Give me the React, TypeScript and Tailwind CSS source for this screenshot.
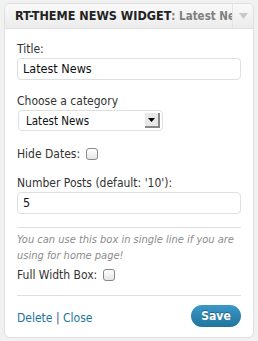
import React from "react";

export default function App() {
  const font = { fontFamily: '"DejaVu Sans Condensed", "DejaVu Sans", Verdana, sans-serif' };
  return (
    <div className="w-[258px] h-[341px] bg-[#f1f1f1] pt-[3px] px-[4px] text-[#333]" style={font}>
      <div className="w-[250px] h-[335px] border border-[#dfdfdf] rounded-[6px] bg-white flex flex-col overflow-hidden">
        <div className="h-[25px] shrink-0 flex items-stretch bg-gradient-to-b from-[#f9f9f9] to-[#ececec] border-b border-[#dfdfdf]">
          <div className="flex-1 min-w-0 overflow-hidden whitespace-nowrap pl-[10px] flex items-center leading-[14px] font-bold">
            <span className="text-[#222] text-[12.5px]">RT-THEME NEWS WIDGET</span>
            <span className="text-[#808080] text-[11.5px]">:&nbsp;Latest&nbsp;News</span>
          </div>
          <div className="w-[21px] shrink-0 border-l border-[#e4e4e4] flex items-center justify-center">
            <svg width="9" height="6" viewBox="0 0 9 6"><path d="M0 0h9L4.5 6z" fill="#c8c8c8" /></svg>
          </div>
        </div>
        <div className="flex-1 px-[12px] pt-[13px] text-[12px] leading-[14px]">
          <div>Title:</div>
          <div className="mt-[2px] h-[22px] border border-[#dfdfdf] rounded-[4px] flex items-center pl-[5px] text-[12.5px] text-[#111]">Latest News</div>
          <div className="mt-[14px]">Choose a category</div>
          <div className="mt-[2px] ml-[1px] w-[145px] h-[21px] border border-[#dfdfdf] rounded-[4px] flex items-center justify-between pl-[7px] pr-[2px] text-[11.5px] text-[#111]">
            <span>Latest News</span>
            <div className="w-[15px] h-[15px] bg-[#e8e8e8] border-r-2 border-b-2 border-[#888] flex items-center justify-center">
              <svg width="7" height="4" viewBox="0 0 7 4"><path d="M0 0h7L3.5 4z" fill="#000" /></svg>
            </div>
          </div>
          <div className="mt-[16px] flex items-center gap-[6px] h-[14px]">
            <span>Hide Dates:</span>
            <span className="w-[12px] h-[12px] border border-[#888] rounded-[3px] bg-gradient-to-b from-white to-[#e6e6e6]" />
          </div>
          <div className="mt-[15px]">Number Posts (default: '10'):</div>
          <div className="mt-[2px] h-[22px] border border-[#dfdfdf] rounded-[4px] flex items-center pl-[5px] text-[12.5px] text-[#111]">5</div>
          <div className="mt-[13px] border-t border-[#dfdfdf]" />
          <div className="mt-[4px] italic text-[11px] leading-[16px] text-[#8c8c8c]">You can use this box in single line if you are using for home page!</div>
          <div className="mt-[4px] flex items-center gap-[6px] h-[14px]">
            <span>Full Width Box:</span>
            <span className="w-[12px] h-[12px] border border-[#888] rounded-[3px] bg-gradient-to-b from-white to-[#e6e6e6]" />
          </div>
          <div className="mt-[13px] border-t border-[#dfdfdf]" />
          <div className="mt-[9px] flex items-center justify-between">
            <div className="pt-[3px]">
              <span className="text-[#21759b]">Delete</span>
              <span className="text-[#4b4b8a]"> | </span>
              <span className="text-[#21759b]">Close</span>
            </div>
            <div className="w-[50px] h-[22px] rounded-full bg-gradient-to-b from-[#3a98c8] to-[#21759b] text-white font-bold text-[12px] flex items-center justify-center [text-shadow:0_-1px_0_rgba(0,0,0,0.3)]">Save</div>
          </div>
        </div>
      </div>
    </div>
  );
}
